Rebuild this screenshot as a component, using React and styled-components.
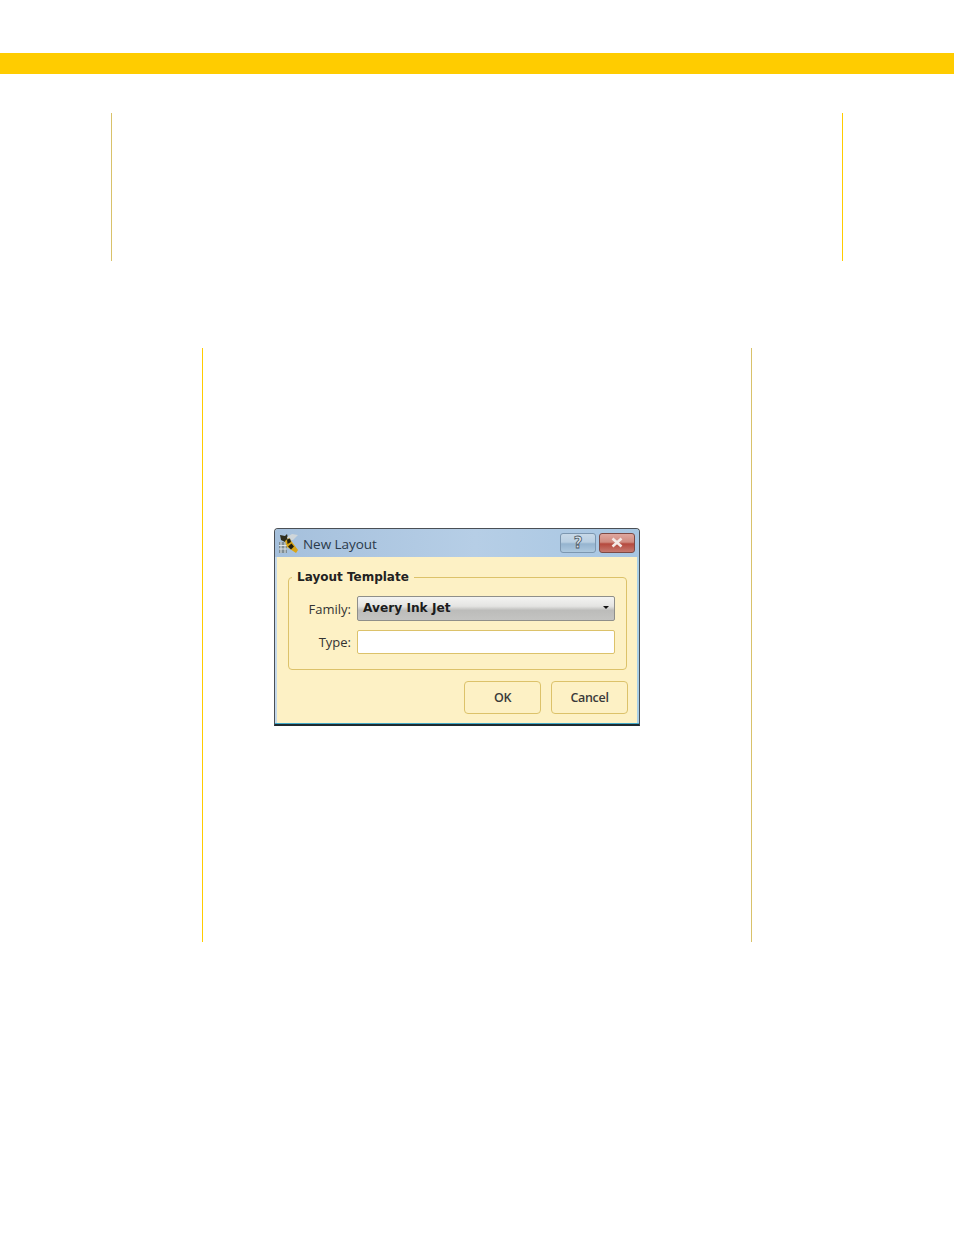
import React from "react";
import styled, { createGlobalStyle } from "styled-components";

const GlobalStyle = createGlobalStyle`
html, body {
  margin: 0;
  padding: 0;
  background: #fff;
}
`;

const Page = styled.div`
width: 954px;
height: 1235px;
padding-top: 53px;
box-sizing: border-box;
overflow: hidden;
`;

const Band = styled.div`
height: 21px;
background: #ffcc00;
`;

const TopFrame = styled.div`
box-sizing: border-box;
width: 732px;
height: 148px;
margin: 39px 0 0 111px;
border-left: 1px solid #d9c26a;
border-right: 1px solid #ffcc00;
`;

const FigureFrame = styled.div`
box-sizing: border-box;
width: 550px;
height: 594px;
margin: 87px 0 0 202px;
padding: 180px 0 0 71px;
border-left: 1px solid #ffcc00;
border-right: 1px solid #d9c26a;
`;

const Dialog = styled.div`
box-sizing: border-box;
width: 366px;
height: 198px;
display: flex;
flex-direction: column;
background: #fdf1c5;
border: 1px solid #4a4f55;
border-bottom: 2px solid #1e2a30;
border-radius: 4px 4px 0 0;
box-shadow: inset 0 -1px 0 #3fa9c9, inset -2px 0 0 #a9cfe6, inset 2px 0 0 #c5d9ea;
font-family: "Open Sans", "Noto Sans", sans-serif;
color: #2c2c2c;
`;

const TitleBar = styled.div`
height: 28px;
flex: none;
display: flex;
align-items: center;
padding: 0 4px 0 3px;
border-radius: 3px 3px 0 0;
background: linear-gradient(to right, #a5c0dc 0%, #b6cee6 55%, #a7c6e2 100%);
`;

const Title = styled.span`
margin: 1px 0 0 4px;
flex: 1;
font-size: 13.5px;
letter-spacing: -0.05px;
color: #2b3a4a;
`;

const CaptionButton = styled.div`
box-sizing: border-box;
width: 36px;
height: 20px;
margin-left: ${(p) => (p.$close ? "3px" : "0")};
margin-top: -1px;
display: flex;
align-items: center;
justify-content: center;
border: 1px solid ${(p) => (p.$close ? "#7d4a45" : "#7d97b0")};
border-radius: 3px;
font-family: "DejaVu Sans", sans-serif;
font-size: 15px;
font-weight: 700;
color: #dfe6ec;
-webkit-text-stroke: 0.8px #4d5a66;
background: ${(p) =>
  p.$close
    ? "linear-gradient(to bottom, #dfa79f 0%, #d08b80 45%, #b5493e 55%, #c67a70 100%)"
    : "linear-gradient(to bottom, #c8d9e8 0%, #b9cfe2 45%, #95b4cf 55%, #aec9df 100%)"};
`;

const Body = styled.div`
flex: 1;
padding: 0 11px 0 13px;
`;

const Group = styled.fieldset`
box-sizing: border-box;
width: 339px;
height: 101px;
margin: 12px 0 0 0;
padding: 11px 11px 0 0;
border: 1px solid #dcc26a;
border-radius: 4px;
`;

const GroupTitle = styled.legend`
margin-left: 3px;
padding: 0 5px;
font-family: "DejaVu Sans", sans-serif;
font-size: 12px;
line-height: 16px;
font-weight: 700;
color: #222;
`;

const FieldRow = styled.div`
display: flex;
align-items: center;
height: ${(p) => p.$h}px;
margin-bottom: 9px;
`;

const FieldLabel = styled.label`
width: 62px;
margin-right: 6px;
text-align: right;
font-size: 13px;
color: #333;
`;

const SelectBox = styled.div`
box-sizing: border-box;
width: 258px;
height: 100%;
display: flex;
align-items: center;
justify-content: space-between;
padding: 0 5px 1px 5px;
border: 1px solid #8f8f8a;
border-radius: 2px;
background: linear-gradient(to bottom, #f4f4f2 0%, #e4e4e2 40%, #bcbcba 58%, #c4c4c2 100%);
font-family: "DejaVu Sans", sans-serif;
font-size: 12.2px;
font-weight: 700;
color: #1c1c1c;
`;

const Arrow = styled.span`
width: 0;
height: 0;
border-left: 3px solid transparent;
border-right: 3px solid transparent;
border-top: 3px solid #111;
margin-bottom: 2px;
`;

const TextBox = styled.div`
box-sizing: border-box;
width: 258px;
height: 100%;
background: #fff;
border: 1px solid #dcc26a;
border-radius: 2px;
`;

const Actions = styled.div`
display: flex;
justify-content: flex-end;
gap: 10px;
margin: 11px 0 0 0;
`;

const ActionButton = styled.div`
box-sizing: border-box;
width: 77px;
height: 33px;
display: flex;
align-items: center;
justify-content: center;
border: 1px solid #dcc26a;
border-radius: 4px;
background: #fdf1c5;
font-size: 12.5px;
font-weight: 600;
letter-spacing: -0.3px;
color: #3a3a3a;
`;

function BeeIcon() {
  return (
    <svg width="21" height="21" viewBox="0 0 21 21">
      <path d="M1 9h8v11H1z" fill="#7f8d94" />
      <path d="M1 12.5h8M1 16h8M3 9v11M7 9v11" stroke="#dfe4e6" strokeWidth="1" />
      <path d="M2 2l5 1 2-2 1 4-3 4-4-2z" fill="#2f2d1c" />
      <path d="M9 4l5-3 6 1-5 5-5 0z" fill="#cfd6da" />
      <path d="M7 8l4-3 9 12-2 3-9-6z" fill="#d9a516" />
      <path d="M9 6.5l3-1 1 3.5-3.5 2zM13.5 10.5l2.5 3-3 3-3-3z" fill="#22200f" />
    </svg>
  );
}

function CloseIcon() {
  return (
    <svg width="14" height="11" viewBox="0 0 14 11">
      <path d="M2.5 1.5l9 8M11.5 1.5l-9 8" stroke="#f3e9e6" strokeWidth="2.6" />
    </svg>
  );
}

export default function App() {
  return (
    <Page>
      <GlobalStyle />
      <Band />
      <TopFrame />
      <FigureFrame>
        <Dialog>
          <TitleBar>
            <BeeIcon />
            <Title>New Layout</Title>
            <CaptionButton>?</CaptionButton>
            <CaptionButton $close>
              <CloseIcon />
            </CaptionButton>
          </TitleBar>
          <Body>
            <Group>
              <GroupTitle>Layout Template</GroupTitle>
              <FieldRow $h={25}>
                <FieldLabel>Family:</FieldLabel>
                <SelectBox>
                  Avery Ink Jet
                  <Arrow />
                </SelectBox>
              </FieldRow>
              <FieldRow $h={24}>
                <FieldLabel>Type:</FieldLabel>
                <TextBox />
              </FieldRow>
            </Group>
            <Actions>
              <ActionButton>OK</ActionButton>
              <ActionButton>Cancel</ActionButton>
            </Actions>
          </Body>
        </Dialog>
      </FigureFrame>
    </Page>
  );
}
